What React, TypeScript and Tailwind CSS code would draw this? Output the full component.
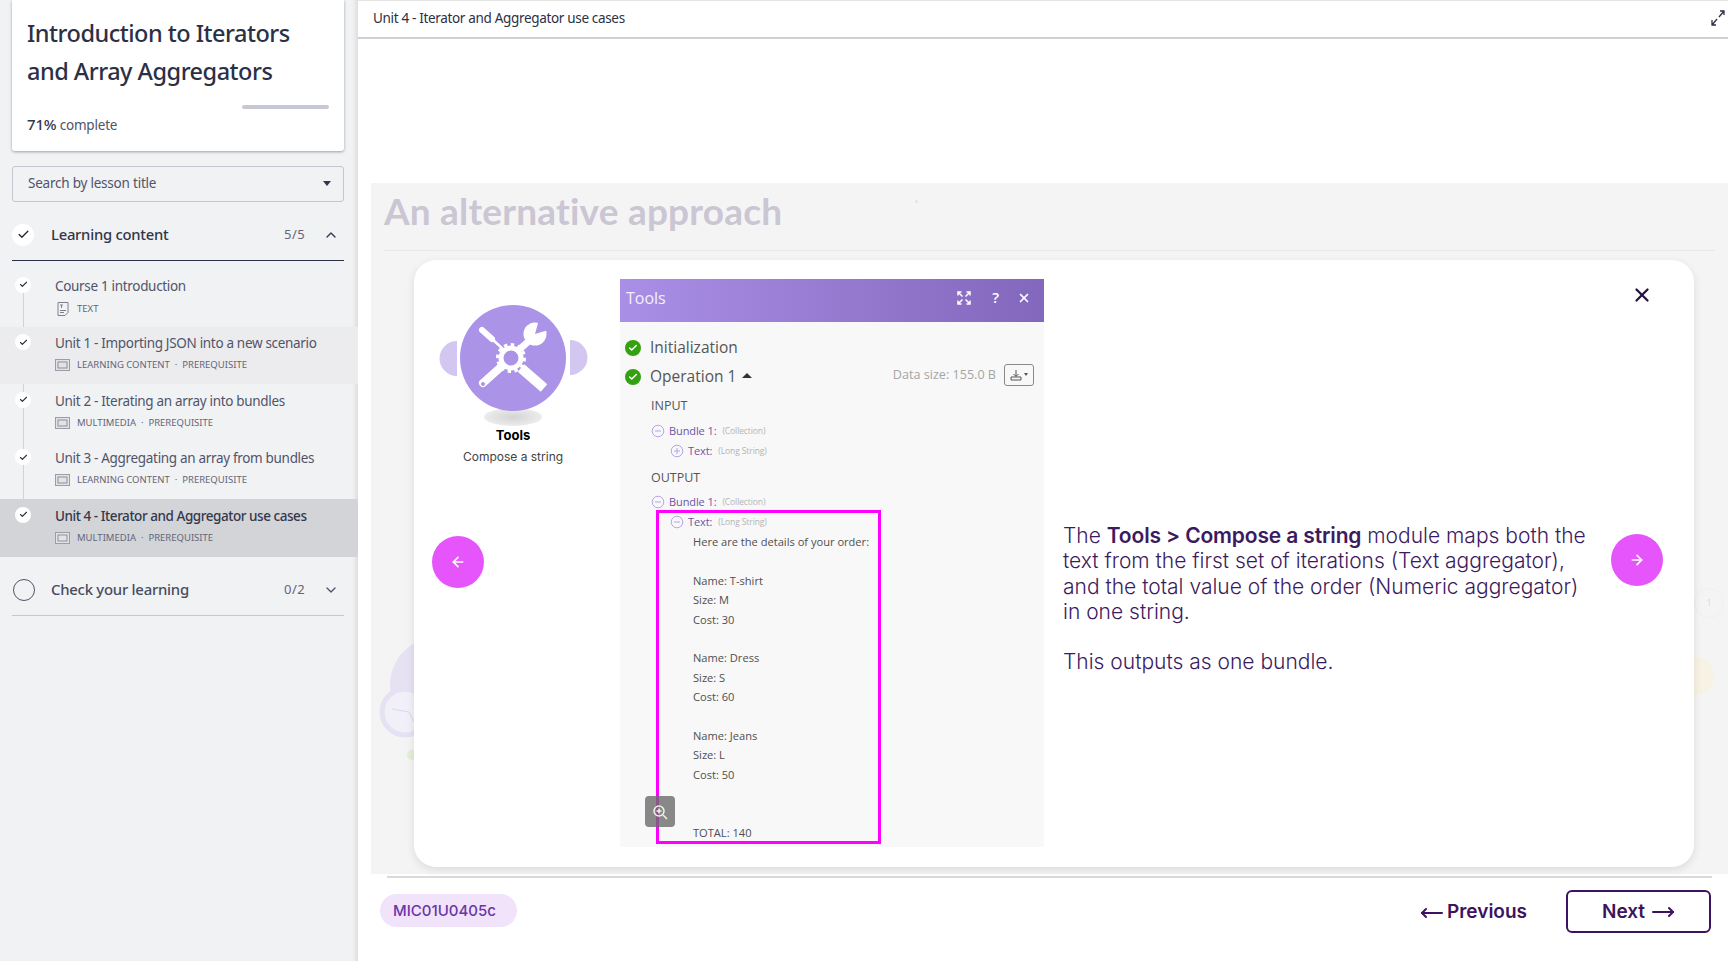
import { ArrowLeft, ArrowRight, Check, ChevronDown, ChevronUp, MoveLeft, MoveRight, X } from 'lucide-react'

const lessons = [
  { title: 'Course 1 introduction', meta: 'TEXT', icon: 'text' },
  { title: 'Unit 1 - Importing JSON into a new scenario', meta: 'LEARNING CONTENT  ·  PREREQUISITE', icon: 'media', hover: true },
  { title: 'Unit 2 - Iterating an array into bundles', meta: 'MULTIMEDIA  ·  PREREQUISITE', icon: 'media' },
  { title: 'Unit 3 - Aggregating an array from bundles', meta: 'LEARNING CONTENT  ·  PREREQUISITE', icon: 'media' },
  { title: 'Unit 4 - Iterator and Aggregator use cases', meta: 'MULTIMEDIA  ·  PREREQUISITE', icon: 'media', active: true },
]

const order = [
  'Here are the details of your order:',
  '',
  'Name: T-shirt',
  'Size: M',
  'Cost: 30',
  '',
  'Name: Dress',
  'Size: S',
  'Cost: 60',
  '',
  'Name: Jeans',
  'Size: L',
  'Cost: 50',
  '',
  '',
  'TOTAL: 140',
]

function TextIcon() {
  return (
    <svg width="12" height="14" viewBox="0 0 12 14" fill="none" stroke="#71747f" strokeWidth="0.9">
      <path d="M1 .5h10v10l-3 3H1z" />
      <path d="M3 3h3M4.500 3v3M3 8.500h6M3 10.500h4" />
    </svg>
  )
}

function MediaIcon() {
  return (
    <svg width="15" height="12" viewBox="0 0 15 12" fill="none">
      <rect x="0.5" y="0.5" width="14" height="11" fill="#e2e3e6" stroke="#9b9da6" />
      <rect x="3" y="3" width="9" height="6" stroke="#8d8f99" />
    </svg>
  )
}

function CheckDot() {
  return (
    <div className="flex h-4 w-4 items-center justify-center rounded-full bg-white">
      <Check size={9} strokeWidth={3} className="text-[#2c2f3f]" />
    </div>
  )
}

function Sidebar() {
  return (
    <aside className="z-10 flex h-screen w-[358px] shrink-0 flex-col bg-[#f1f2f4] pr-[14px] pl-3 font-['Noto_Sans',sans-serif] text-[#32364a] shadow-[inset_-6px_0_5px_-4px_rgba(0,0,0,0.1)]">
      <div className="h-[151px] rounded-b-[3px] bg-white px-[15px] pt-[14px] shadow-[0_1px_3px_rgba(0,0,0,0.35)]">
        <h1 className="text-[23.500px] leading-[38px] font-medium tracking-[-0.5px] text-[#2c3045]">
          Introduction to Iterators and Array Aggregators
        </h1>
        <div className="mt-[15px] flex justify-end">
          <div className="h-1 w-[87px] rounded-sm bg-[#c6c9d3]" />
        </div>
        <p className="mt-[6px] text-[13.500px] leading-[18px] tracking-[-0.2px]">
          <span className="text-[15px] font-medium">71%</span> <span className="text-[#50546a]">complete</span>
        </p>
      </div>

      <div className="mt-[15px] flex h-[36px] items-center justify-between rounded-[3px] border border-[#c4c7cf] pr-3 pb-[2px] pl-[15px] text-[13.500px] tracking-[-0.22px] text-[#50546a]">
        <span>Search by lesson title</span>
        <span className="h-0 w-0 border-x-4 border-t-[5px] border-x-transparent border-t-[#33374b]" />
      </div>

      <div className="mt-[15px] flex h-[44px] items-center border-b border-[#2c3045] pb-[8px]">
        <div className="flex h-[22px] w-[22px] items-center justify-center rounded-full bg-white">
          <Check size={13} strokeWidth={2.500} className="text-[#23263a]" />
        </div>
        <span className="ml-[17px] flex-1 text-[14.800px] font-medium tracking-[-0.25px]">Learning content</span>
        <span className="text-[13px] tracking-[0.4px] text-[#62667a]">5/5</span>
        <ChevronUp size={16} className="mr-[5px] ml-[18px] text-[#33374b]" />
      </div>

      <ul className="relative mr-[-14px] ml-[-12px] pt-2">
        <div className="absolute top-[22px] bottom-[44px] left-[23px] w-px bg-[#d1d3d8]" />
        {lessons.map((l) => (
          <li
            key={l.title}
            className={`relative flex h-[57.500px] pt-[7.500px] pl-[15px] ${l.active ? 'bg-[#d3d4d8]' : l.hover ? 'bg-[#ececee]' : ''}`}
          >
            <CheckDot />
            <div className="ml-[24px]">
              <div className={`text-[13.500px] leading-[18px] ${l.active ? 'font-medium tracking-[-0.45px] text-[#34384c]' : 'tracking-[-0.32px] text-[#50546a]'}`}>
                {l.title}
              </div>
              <div className="mt-[7px] flex items-center gap-[7px] text-[9.500px] leading-[12px] whitespace-pre text-[#62667a]">
                <span className="flex w-[15px] justify-center">{l.icon === 'text' ? <TextIcon /> : <MediaIcon />}</span>
                {l.meta}
              </div>
            </div>
          </li>
        ))}
      </ul>

      <div className="mt-[12px] flex h-[47px] items-center border-b border-[#c4c7cf] pb-[4px]">
        <div className="ml-px h-[22px] w-[22px] rounded-full border-[1.500px] border-[#50546a]" />
        <span className="ml-[16px] flex-1 text-[14.900px] font-medium tracking-[-0.25px] text-[#484c60]">Check your learning</span>
        <span className="text-[13px] tracking-[0.4px] text-[#62667a]">0/2</span>
        <ChevronDown size={16} className="mr-[5px] ml-[18px] text-[#50546a]" />
      </div>
    </aside>
  )
}

function ToolsBadge() {
  return (
    <svg width="154" height="130" viewBox="0 0 154 130" fill="none">
      <defs>
        <radialGradient id="floor">
          <stop offset="0" stopColor="#d4d4d4" />
          <stop offset="1" stopColor="#ececec" />
        </radialGradient>
      </defs>
      <path d="M21 40A17.500 17.500 0 0 0 21 75Z" fill="#d3c6f0" />
      <path d="M134 39A17.500 17.500 0 0 1 134 74Z" fill="#d3c6f0" />
      <ellipse cx="77" cy="116" rx="29" ry="9" fill="url(#floor)" />
      <circle cx="77" cy="57" r="53" fill="#ab93e8" />
      <g stroke="#fff" strokeLinecap="round">
        <path d="M46 29l10 9" strokeWidth="6" />
        <path d="M56 38l11 10" strokeWidth="2.500" />
        <path d="M47 82l19-17" strokeWidth="8" />
        <path d="M85 67l23 20" strokeWidth="10" strokeLinecap="butt" />
        <path d="M85 47l9-8" strokeWidth="7" />
        <circle cx="75" cy="57" r="10" strokeWidth="5" />
        <circle cx="75" cy="57" r="13.500" strokeWidth="3" strokeDasharray="3.500 3.500" strokeLinecap="butt" />
      </g>
      <circle cx="99" cy="33" r="11.500" fill="#fff" />
      <path d="M99 33L104 15L119 27Z" fill="#ab93e8" />
      <circle cx="47" cy="83" r="2" fill="#ab93e8" />
    </svg>
  )
}

function Toggle({ plus }: { plus?: boolean }) {
  return (
    <svg width="14" height="14" viewBox="0 0 14 14" fill="none" stroke="#b7a6e6">
      <circle cx="7" cy="7" r="5.800" />
      <path d={plus ? 'M4 7h6M7 4v6' : 'M4 7h6'} />
    </svg>
  )
}

function GreenTick() {
  return (
    <div className="flex h-4 w-4 items-center justify-center rounded-full bg-[#34a111]">
      <Check size={10} strokeWidth={3.500} className="text-white" />
    </div>
  )
}

function TreeRow({ label, kind, plus }: { label: string; kind: string; plus?: boolean }) {
  return (
    <div className="flex h-5 items-center">
      <Toggle plus={plus} />
      <span className="ml-[4px] text-[11px] tracking-[-0.1px] text-[#6c54a8]">{label}</span>
      <span className="ml-[6px] text-[8.500px] tracking-[-0.1px] text-[#b4b4b4]">{kind}</span>
    </div>
  )
}

function ToolsPanel() {
  return (
    <div className="relative h-[568px] w-[424px] shrink-0 bg-[#f8f8f8] font-['Open_Sans',sans-serif] text-[#555]">
      <div className="flex h-[43px] items-center bg-gradient-to-r from-[#aa8fe6] to-[#8367bc] pr-[13px] pb-[6px] pl-[6px] text-[#f4effc]">
        <span className="flex-1 text-[16px] font-medium">Tools</span>
        <svg width="14" height="14" viewBox="0 0 14 14" fill="none" stroke="#fff" strokeWidth="1.500" className="mr-[21px]">
          <path d="M1 4.500V1h3.500M13 4.500V1H9.500M1 9.500V13h3.500M13 9.500V13H9.500M2 2l3.500 3.500M12 2L8.500 5.500M2 12l3.500-3.500M12 12L8.500 8.500" />
        </svg>
        <span className="mr-[18px] text-[15px] font-semibold text-white">?</span>
        <X size={14} strokeWidth={3} className="text-white" />
      </div>

      <div className="pl-[5px]">
        <div className="mt-[11px] flex h-[29px] items-center gap-[9px] text-[15.500px]">
          <GreenTick />
          Initialization
        </div>
        <div className="flex h-[29px] items-center gap-[9px] text-[15.500px]">
          <GreenTick />
          Operation 1
          <span className="-ml-[3px] h-0 w-0 -translate-y-px border-x-[5px] border-b-[5px] border-x-transparent border-b-[#333]" />
          <span className="ml-auto -translate-y-px text-[12.600px] text-[#a5a5a5]">Data size: 155.0 B</span>
          <div className="mr-[10px] ml-[-1px] flex h-[22px] w-[30px] -translate-y-0.5 items-center justify-center gap-[2px] rounded-[3px] border border-[#8a8a8a]">
            <svg width="12" height="12" viewBox="0 0 12 12" fill="none" stroke="#555">
              <path d="M6 1v6M3.500 5L6 7.500 8.500 5M1 8h10v3H1z" />
            </svg>
            <span className="h-0 w-0 border-x-[2.500px] border-t-[3px] border-x-transparent border-t-[#555]" />
          </div>
        </div>

        <div className="mt-[5px] pl-[26px]">
          <div className="flex h-5 items-center text-[12.500px]">INPUT</div>
          <div className="mt-[5px]">
            <TreeRow label="Bundle 1:" kind="(Collection)" />
            <div className="pl-[19px]">
              <TreeRow label="Text:" kind="(Long String)" plus />
            </div>
          </div>
          <div className="mt-[7px] flex h-5 items-center text-[12.500px]">OUTPUT</div>
          <div className="mt-[4px]">
            <TreeRow label="Bundle 1:" kind="(Collection)" />
            <div className="pl-[19px]">
              <TreeRow label="Text:" kind="(Long String)" />
            </div>
          </div>
          <div className="pl-[42px] text-[11.100px] leading-[19.400px] text-[#4f4f4f]">
            {order.map((line, i) => (
              <div key={i} className="h-[19.400px]">
                {line}
              </div>
            ))}
          </div>
        </div>
      </div>

      <div className="absolute top-[231px] left-[36px] h-[334px] w-[225px] border-[3px] border-[#ff00ff]" />
      <div className="absolute top-[517px] left-[25px] flex h-[31px] w-[30px] items-center justify-center rounded-[4px] bg-[#6b6b6b]/80">
        <svg width="16" height="16" viewBox="0 0 16 16" fill="none" stroke="#f2f2e4" strokeWidth="1.500">
          <circle cx="7" cy="7" r="5" />
          <path d="M7 4.500v5M4.500 7h5M11 11l4 4" />
        </svg>
      </div>
    </div>
  )
}

function Modal() {
  return (
    <div className="absolute top-[77px] right-[34px] left-[43px] z-10 flex h-[607px] rounded-[22px] bg-white pt-[19px] shadow-[0_3px_8px_rgba(0,0,0,0.1)]">
      <div className="flex w-[206px] shrink-0 flex-col items-start">
        <div className="ml-[22px] flex w-[154px] flex-col items-center font-['Inter',sans-serif]">
          <div className="mt-[22px]">
            <ToolsBadge />
          </div>
          <div className="-mt-[6px] text-[13px] leading-[20px] font-bold text-black">Tools</div>
          <div className="mt-[2px] text-[12px] leading-[20px] text-[#444]">Compose a string</div>
        </div>
        <button className="mt-[69px] ml-[18px] flex h-[52px] w-[52px] items-center justify-center rounded-full bg-[#e655fb] text-white">
          <ArrowLeft size={16} strokeWidth={2.500} />
        </button>
      </div>

      <ToolsPanel />

      <div className="relative flex-1 pl-[19px] font-['Inter',sans-serif] text-[#3c1a5e]">
        <X size={22} strokeWidth={2.500} className="absolute top-[5px] right-[41px] text-[#26133f]" />
        <div className="mt-[244px] w-[525px] text-[21px] leading-[25.300px] font-light">
          <p>
            The <b className="font-semibold tracking-[-0.15px]">Tools &gt; Compose a string</b> module maps both the text from the first set of iterations (Text aggregator), and the total value of the order (Numeric aggregator) in one string.
          </p>
          <p className="mt-[25px]">This outputs as one bundle.</p>
        </div>
        <button className="absolute top-[255px] right-[31px] flex h-[52px] w-[52px] items-center justify-center rounded-full bg-[#e655fb] text-white">
          <ArrowRight size={16} strokeWidth={2.500} />
        </button>
      </div>
    </div>
  )
}

export default function App() {
  return (
    <div className="flex h-screen overflow-hidden bg-white">
      <Sidebar />
      <main className="flex min-w-0 flex-1 flex-col">
        <header className="flex h-[39px] shrink-0 items-center justify-between border-t border-b-2 border-t-[#e4e4e4] border-b-[#cfcfd4] pr-[3px] pb-[2px] pl-[15px] font-['Noto_Sans',sans-serif] text-[13.500px] tracking-[-0.33px] text-[#2c3045]">
          Unit 4 - Iterator and Aggregator use cases
          <svg width="14" height="16" viewBox="0 0 14 16" fill="none" stroke="#2c3045" strokeWidth="1.300">
            <path d="M9 1h4v4M13 1L8 7M1 10v5h4M1 15l5-6" />
          </svg>
        </header>

        <div className="h-[144px] shrink-0" />

        <section className="relative ml-[13px] h-[691px] shrink-0 bg-[#f4f4f5] px-[13px]">
          <div className="h-[68px] border-b border-[#e8e8e9] pt-[6px] font-['Lato',sans-serif] text-[37px] leading-[44px] font-bold tracking-[0.2px] text-[#cbc6d3]">
            An alternative approach
          </div>
          <div className="absolute top-[17px] left-[544px] h-[3px] w-[3px] rounded-full bg-[#e4e4e8]" />
          <svg width="50" height="150" viewBox="0 0 50 150" fill="none" className="absolute top-[450px] left-[7px]">
            <circle cx="60" cy="52" r="48" fill="#e6e1f3" />
            <circle cx="27" cy="79" r="23" fill="#f1eff7" stroke="#e6e1f3" strokeWidth="5" />
            <path d="M14 76l17 3 5 10" stroke="#dcd6ee" strokeWidth="1" />
            <circle cx="34" cy="122" r="5" fill="#e3eed8" />
          </svg>
          <div className="absolute top-[405px] right-[4px] h-[30px] w-[30px] rounded-full border border-[#f0f0f0] text-center text-[9px] leading-[28px] text-[#dcdcdc]">
            1
          </div>
          <div className="absolute top-[474px] right-[14px] h-[38px] w-[20px] rounded-r-full bg-[#f8f2e4]" />
          <Modal />
        </section>

        <footer className="mt-[2px] mr-4 ml-[29px] flex flex-1 items-start justify-between border-t-2 border-[#dcd9dc] font-['Inter',sans-serif]">
          <div className="mt-[16px] -ml-[7px] flex h-[33px] w-[137px] items-center rounded-full bg-[#f0e3fa] pt-[2px] pl-[13px] text-[15px] font-medium text-[#6b35a8]">
            MIC01U0405c
          </div>
          <div className="mt-[12px] mr-[1px] flex items-center">
            <button className="flex items-center gap-[3px] pt-[2px] text-[19px] font-semibold text-[#3c1361]">
              <MoveLeft size={24} strokeWidth={2} />
              Previous
            </button>
            <button className="ml-[39px] flex h-[43px] w-[145px] items-center justify-center gap-[6px] rounded-[6px] border-2 border-[#3c1361] pt-[1px] text-[19px] font-semibold text-[#3c1361]">
              Next
              <MoveRight size={24} strokeWidth={2} />
            </button>
          </div>
        </footer>
      </main>
    </div>
  )
}
